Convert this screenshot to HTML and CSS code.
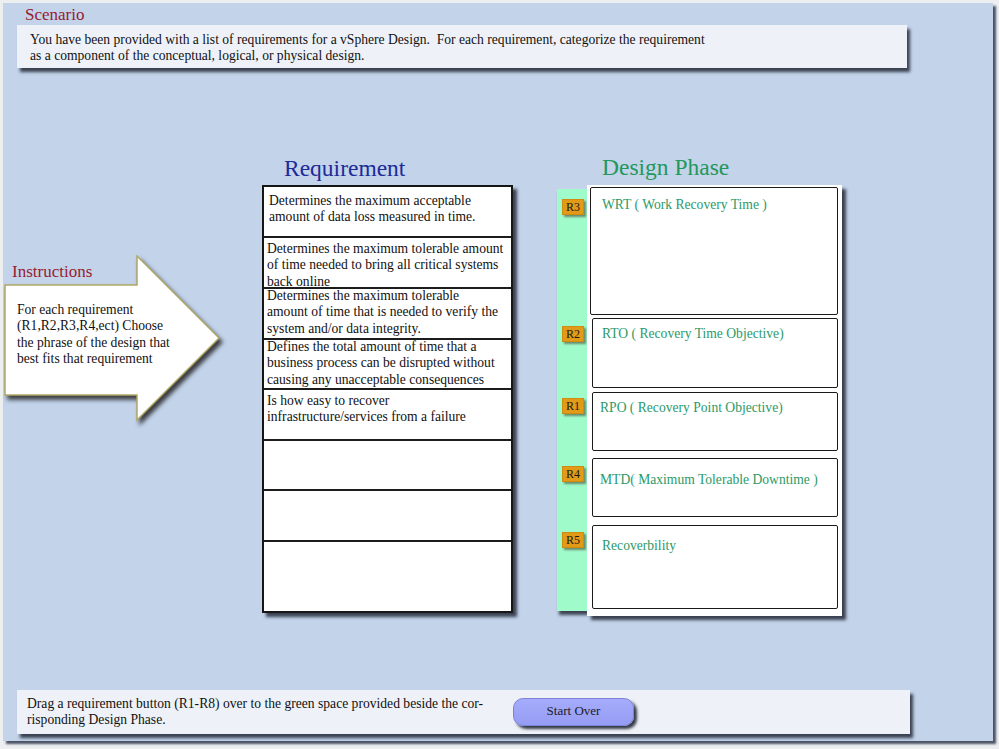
FILE: index.html
```html
<!DOCTYPE html>
<html lang="en">
<head>
<meta charset="utf-8">
<title>vSphere Design - Requirements</title>
<link rel="stylesheet" href="styles.css">
</head>
<body>
<div class="frame">
  <header class="scenario">
    <h2 class="section-title">Scenario</h2>
    <div class="scenario-box">
      <p>You have been provided with a list of requirements for a vSphere Design.&nbsp; For each requirement, categorize the requirement<br>as a component of the conceptual, logical, or physical design.</p>
    </div>
  </header>

  <main class="workspace">
    <section class="instructions">
      <svg class="arrow" width="224" height="172" viewBox="0 0 224 172" aria-hidden="true">
        <polygon points="2,30 134,30 134,1 216,83 134,165 134,140 2,140" />
      </svg>
      <h2 class="section-title instructions-title">Instructions</h2>
      <p class="instructions-text">For each requirement<br>(R1,R2,R3,R4,ect) Choose<br>the phrase of the design that<br>best fits that requirement</p>
    </section>

    <section class="req-col">
      <h1 class="col-title req-title">Requirement</h1>
      <div class="req-table">
        <div class="req-row row-a"><p>Determines the maximum acceptable<br>amount of data loss measured in time.</p></div>
        <div class="req-row row-b"><p>Determines the maximum tolerable amount<br>of time needed to bring all critical systems<br>back online</p></div>
        <div class="req-row row-c"><p>Determines the maximum tolerable<br>amount of time that is needed to verify the<br>system and/or data integrity.</p></div>
        <div class="req-row row-c short"><p>Defines the total amount of time that a<br>business process can be disrupted without<br>causing any unacceptable consequences</p></div>
        <div class="req-row row-e"><p>Is how easy to recover<br>infrastructure/services from a failure</p></div>
        <div class="req-row short"></div>
        <div class="req-row"></div>
        <div class="req-row last"></div>
      </div>
    </section>

    <section class="design-col">
      <h1 class="col-title design-title">Design Phase</h1>
      <div class="design-body">
        <div class="strip">
          <span class="badge badge-1">R3</span>
          <span class="badge badge-2">R2</span>
          <span class="badge badge-3">R1</span>
          <span class="badge badge-4">R4</span>
          <span class="badge badge-5">R5</span>
        </div>
        <div class="panel">
          <div class="phase phase-1">WRT ( Work Recovery Time )</div>
          <div class="phase phase-2">RTO ( Recovery Time Objective)</div>
          <div class="phase phase-3">RPO ( Recovery Point Objective)</div>
          <div class="phase phase-4">MTD( Maximum Tolerable Downtime )</div>
          <div class="phase phase-5">Recoverbility</div>
        </div>
      </div>
    </section>
  </main>

  <footer class="bottom-bar">
    <p class="hint">Drag a requirement button (R1-R8) over to the green space provided beside the cor-<br>risponding Design Phase.</p>
    <button class="start-over" type="button">Start Over</button>
  </footer>
</div>
</body>
</html>
```

FILE: styles.css
```css
* {
  box-sizing: border-box;
}

html, body {
  margin: 0;
  padding: 0;
}

body {
  background: #eceef0;
  font-family: "Liberation Serif", "Times New Roman", serif;
  color: #111;
  width: 999px;
  height: 749px;
  overflow: hidden;
}

.frame {
  margin: 3px 0 0 3px;
  width: 990px;
  height: 738px;
  background: #c2d3ea;
  box-shadow: 3px 3px 2px #4c5466;
  display: flex;
  flex-direction: column;
}

/* Scenario */
.section-title {
  margin: 0;
  font-weight: normal;
  font-size: 17px;
  line-height: 20px;
  color: #981b30;
}

.scenario .section-title {
  padding: 2px 0 0 22px;
  height: 22px;
}

.scenario-box {
  margin: 0 0 0 14px;
  width: 890px;
  height: 43px;
  background: #eef2f8;
  box-shadow: 3px 4px 3px #3a4150;
  padding: 7px 0 0 13px;
}

.scenario-box p {
  margin: 0;
  font-size: 13.6px;
  line-height: 16px;
  white-space: nowrap;
}

/* Workspace */
.workspace {
  display: flex;
  align-items: flex-start;
  margin-top: 86px;
}

.instructions {
  position: relative;
  width: 220px;
  height: 170px;
  margin-top: 101px;
  padding-left: 9px;
}

.arrow {
  position: absolute;
  left: 0;
  top: 0;
  filter: drop-shadow(3px 4px 2px rgba(35, 35, 35, 0.85));
}

.arrow polygon {
  fill: #ffffff;
  stroke: #b0a866;
  stroke-width: 1.5;
}

.instructions-title {
  position: relative;
  margin-top: 7px;
}

.instructions-text {
  position: relative;
  margin: 20px 0 0 5px;
  font-size: 13.6px;
  line-height: 16.4px;
  white-space: nowrap;
}

.col-title {
  margin: 0;
  font-weight: normal;
  font-size: 23.5px;
  line-height: 28px;
}

/* Requirement column */
.req-col {
  margin-left: 39px;
  width: 251px;
}

.req-title {
  color: #1d2a98;
  padding-left: 22px;
}

.req-table {
  margin-top: 3px;
  height: 428px;
  border: 2px solid #161616;
  background: #fff;
  box-shadow: 4px 4px 3px #3c4352;
  display: flex;
  flex-direction: column;
}

.req-row {
  height: 51px;
  flex: none;
  border-bottom: 2px solid #1c1c1c;
  font-size: 13.6px;
  line-height: 16.3px;
  padding: 0 0 0 3px;
  white-space: nowrap;
}

.req-row p {
  margin: 0;
}

.req-row.short {
  height: 50px;
}

.req-row.last {
  flex: 1;
  border-bottom: none;
}

.row-a {
  padding: 6px 0 0 5px;
}

.row-b {
  padding-top: 3px;
}

.row-c p {
  margin-top: -1px;
}

.row-e {
  padding-top: 3px;
}

/* Design column */
.design-col {
  margin-left: 44px;
}

.design-title {
  color: #22985c;
  padding-left: 45px;
  margin-top: -1px;
  margin-bottom: 1px;
}

.design-body {
  display: flex;
  align-items: flex-start;
  margin-top: 4px;
}

.strip {
  width: 30px;
  height: 422px;
  margin-top: 4px;
  background: #a0fbcb;
  box-shadow: 2px 4px 3px #3c4352;
  display: flex;
  flex-direction: column;
  align-items: flex-start;
  padding-left: 5px;
}

.badge {
  display: block;
  width: 22px;
  height: 16px;
  background: #e39a16;
  border: 1px solid #cf8c12;
  box-shadow: 2px 2px 2px rgba(60, 50, 30, 0.55);
  font-size: 12px;
  line-height: 14px;
  text-align: center;
  color: #1a1a1a;
}

.badge-1 { margin-top: 10px; }
.badge-2 { margin-top: 111px; }
.badge-3 { margin-top: 56px; }
.badge-4 { margin-top: 52px; }
.badge-5 { margin-top: 50px; }

.panel {
  width: 255px;
  height: 431px;
  background: #ffffff;
  box-shadow: 4px 4px 3px #3a4150;
  display: flex;
  flex-direction: column;
  padding: 2px 4px 0 5px;
}

.phase {
  border: 1.5px solid #1a1a1a;
  border-radius: 2px;
  font-size: 13.6px;
  line-height: 16px;
  color: #2b9a68;
  padding-left: 9px;
  white-space: nowrap;
}

.phase-1 {
  margin-left: -2px;
  height: 128px;
  padding: 9px 0 0 11px;
}

.phase-2 {
  margin-top: 3px;
  height: 70px;
  padding-top: 7px;
}

.phase-3 {
  margin-top: 4px;
  height: 59px;
  padding: 7px 0 0 7px;
}

.phase-4 {
  margin-top: 7px;
  height: 59px;
  padding: 13px 0 0 7px;
}

.phase-5 {
  margin-top: 8px;
  height: 84px;
  padding-top: 12px;
}

/* Bottom bar */
.bottom-bar {
  margin: auto 0 7px 14px;
  width: 893px;
  height: 44px;
  background: #eef2f8;
  box-shadow: 3px 4px 3px #3a4150;
  display: flex;
  align-items: center;
  padding-left: 10px;
}

.hint {
  margin: 0;
  width: 486px;
  font-size: 13.6px;
  line-height: 16px;
  white-space: nowrap;
}

.start-over {
  width: 121px;
  height: 28px;
  padding: 0 0 2px;
  border: 1px solid #7c83d6;
  border-radius: 10px;
  background: linear-gradient(#a6acfb, #959cf3);
  box-shadow: 3px 3px 3px #353a48;
  font-family: "Liberation Serif", "Times New Roman", serif;
  font-size: 13px;
  color: #1a1a2a;
}
```
